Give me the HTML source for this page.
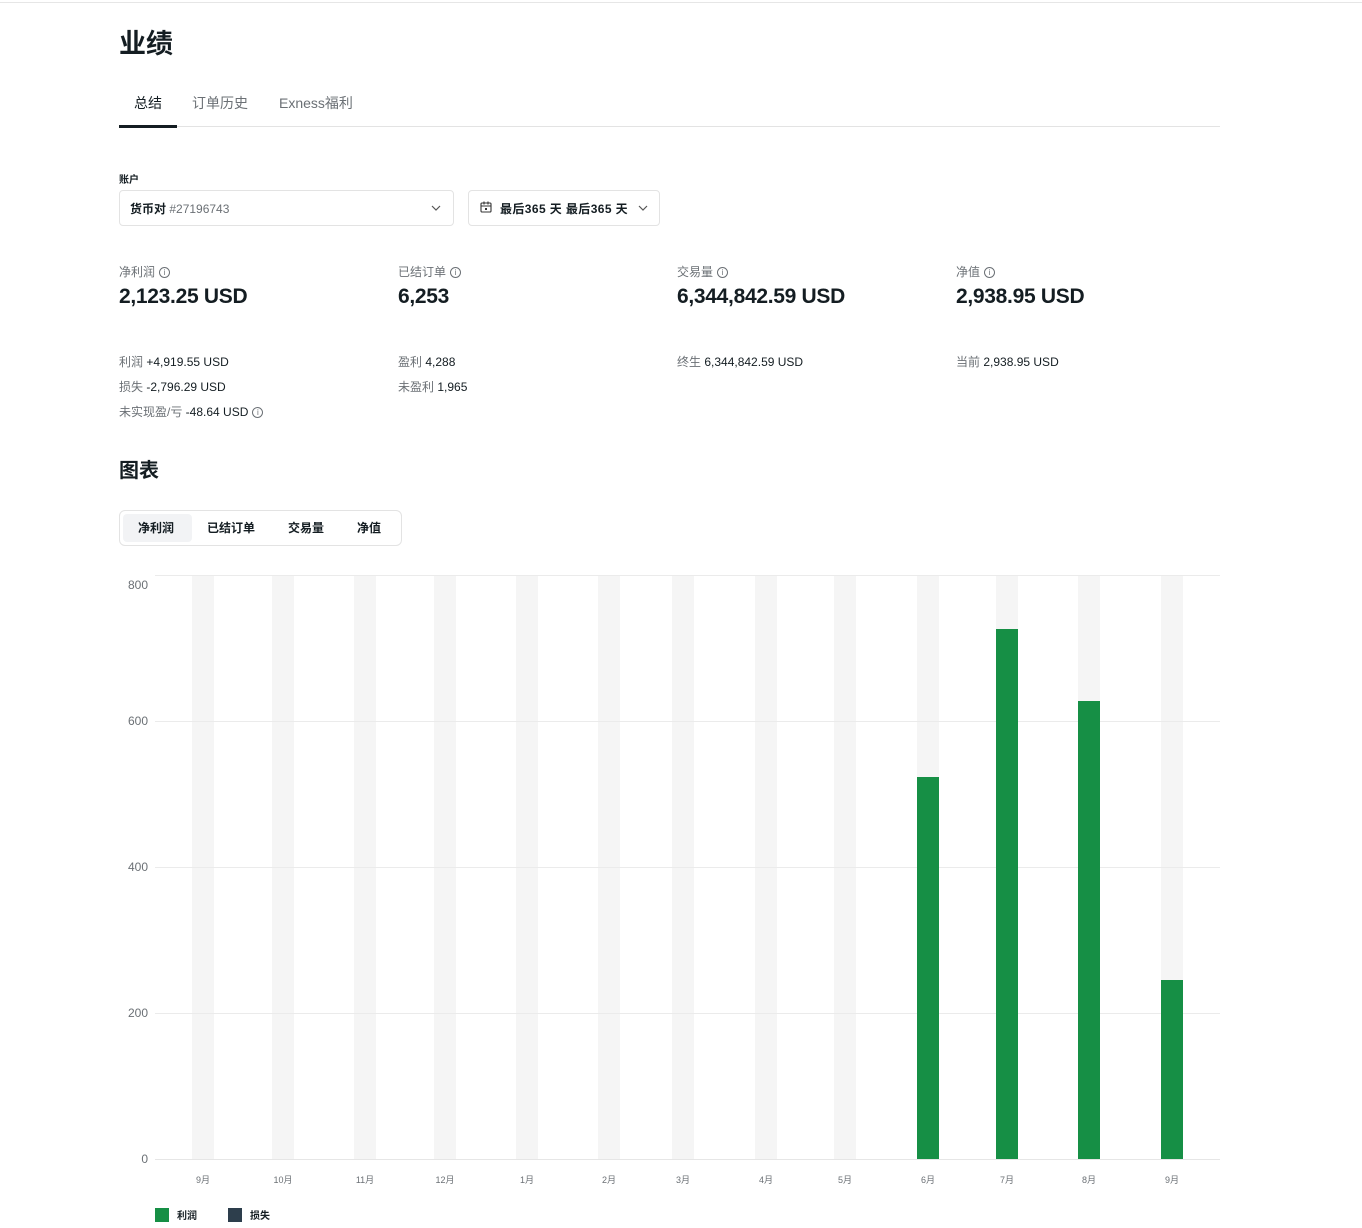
<!DOCTYPE html>
<html><head><meta charset="utf-8"><style>
*{margin:0;padding:0;box-sizing:border-box}
body{width:1362px;height:1228px;background:#fff;position:relative;overflow:hidden;font-family:"Liberation Sans","Noto Sans CJK SC",sans-serif;color:#141d22}
.a{position:absolute;white-space:nowrap}
.lbl{font-size:12px;color:#6b7075}
.big{font-size:21px;font-weight:bold;color:#141d22;letter-spacing:-0.3px}
.sm{font-size:12px;color:#141d22}
.sm span{color:#6b7075}
.i{display:inline-block;width:11px;height:11px;border:1px solid #6b7075;border-radius:50%;font-size:8px;line-height:9px;text-align:center;color:#6b7075;vertical-align:1px;margin-left:4px}
.col{position:absolute;top:575px;width:22px;height:584px;background:#f5f5f5}
.bar{position:absolute;width:22px;background:#168f45}
.gl{position:absolute;left:155px;width:1065px;height:1px;background:#ebebeb}
.yl{position:absolute;left:110px;width:38px;text-align:right;font-size:12px;color:#6b7075}
.xl{position:absolute;top:1173px;width:40px;text-align:center;font-size:9px;color:#6b7075}
</style></head><body>
<div class="a" style="left:0;top:2px;width:1362px;height:1px;background:#e6e6e6"></div>
<div class="a" style="left:119px;top:22px;font-size:27px;font-weight:bold">业绩</div>
<div class="a" style="left:134px;top:93px;font-size:14px;color:#141d22">总结</div>
<div class="a" style="left:192px;top:93px;font-size:14px;color:#6b7075">订单历史</div>
<div class="a" style="left:279px;top:93px;font-size:14px;color:#6b7075">Exness福利</div>
<div class="a" style="left:119px;top:126px;width:1101px;height:1px;background:#e3e3e3"></div>
<div class="a" style="left:119px;top:125px;width:58px;height:3px;background:#141d22"></div>

<div class="a" style="left:119px;top:171px;font-size:10px;font-weight:bold">账户</div>
<div class="a" style="left:119px;top:190px;width:335px;height:36px;border:1px solid #e3e3e3;border-radius:4px"></div>
<div class="a" style="left:130px;top:200px;font-size:12px;font-weight:bold">货币对 <span style="font-weight:normal;color:#6b7075">#27196743</span></div>
<svg class="a" style="left:431px;top:205px" width="10" height="6"><path d="M1 1l4 4 4-4" fill="none" stroke="#555" stroke-width="1.2"/></svg>
<div class="a" style="left:468px;top:190px;width:192px;height:36px;border:1px solid #e3e3e3;border-radius:4px"></div>
<svg class="a" style="left:480px;top:201px" width="12" height="12"><rect x="1" y="2" width="10" height="9" rx="1" fill="none" stroke="#333" stroke-width="1.1"/><path d="M1 5h10M4 0.5v3M8 0.5v3" stroke="#333" stroke-width="1.1"/><rect x="5" y="7" width="2" height="2" fill="#333"/></svg>
<div class="a" style="left:500px;top:200px;font-size:12px;font-weight:bold;letter-spacing:0.4px">最后365 天 最后365 天</div>
<svg class="a" style="left:638px;top:205px" width="10" height="6"><path d="M1 1l4 4 4-4" fill="none" stroke="#555" stroke-width="1.2"/></svg>

<div class="a lbl" style="left:119px;top:263px">净利润<span class="i">i</span></div>
<div class="a big" style="left:119px;top:285px">2,123.25 USD</div>
<div class="a lbl" style="left:398px;top:263px">已结订单<span class="i">i</span></div>
<div class="a big" style="left:398px;top:285px">6,253</div>
<div class="a lbl" style="left:677px;top:263px">交易量<span class="i">i</span></div>
<div class="a big" style="left:677px;top:285px">6,344,842.59 USD</div>
<div class="a lbl" style="left:956px;top:263px">净值<span class="i">i</span></div>
<div class="a big" style="left:956px;top:285px">2,938.95 USD</div>

<div class="a sm" style="left:119px;top:353px"><span>利润</span> +4,919.55 USD</div>
<div class="a sm" style="left:119px;top:378px"><span>损失</span> -2,796.29 USD</div>
<div class="a sm" style="left:119px;top:403px"><span>未实现盈/亏</span> -48.64 USD<span class="i">i</span></div>
<div class="a sm" style="left:398px;top:353px"><span>盈利</span> 4,288</div>
<div class="a sm" style="left:398px;top:378px"><span>未盈利</span> 1,965</div>
<div class="a sm" style="left:677px;top:353px"><span>终生</span> 6,344,842.59 USD</div>
<div class="a sm" style="left:956px;top:353px"><span>当前</span> 2,938.95 USD</div>

<div class="a" style="left:119px;top:454px;font-size:20px;font-weight:bold">图表</div>
<div class="a" style="left:119px;top:510px;width:283px;height:36px;border:1px solid #e3e3e3;border-radius:6px"></div>
<div class="a" style="left:123px;top:514px;width:69px;height:28px;background:#f2f3f5;border-radius:4px"></div>
<div class="a" style="left:138px;top:519px;font-size:12px;font-weight:bold">净利润</div>
<div class="a" style="left:207px;top:519px;font-size:12px;font-weight:bold">已结订单</div>
<div class="a" style="left:288px;top:519px;font-size:12px;font-weight:bold">交易量</div>
<div class="a" style="left:357px;top:519px;font-size:12px;font-weight:bold">净值</div>

<div class="col" style="left:192px"></div><div class="col" style="left:272px"></div><div class="col" style="left:354px"></div><div class="col" style="left:434px"></div><div class="col" style="left:516px"></div><div class="col" style="left:598px"></div><div class="col" style="left:672px"></div><div class="col" style="left:755px"></div><div class="col" style="left:834px"></div><div class="col" style="left:917px"></div><div class="col" style="left:996px"></div><div class="col" style="left:1078px"></div><div class="col" style="left:1161px"></div>
<div class="gl" style="top:575px"></div><div class="gl" style="top:721px"></div><div class="gl" style="top:867px"></div><div class="gl" style="top:1013px"></div><div class="gl" style="top:1159px;background:#e6e6e6"></div>
<div class="bar" style="left:917px;top:777px;height:382px"></div>
<div class="bar" style="left:996px;top:629px;height:530px"></div>
<div class="bar" style="left:1078px;top:701px;height:458px"></div>
<div class="bar" style="left:1161px;top:980px;height:179px"></div>
<div class="yl" style="top:578px">800</div><div class="yl" style="top:714px">600</div><div class="yl" style="top:860px">400</div><div class="yl" style="top:1006px">200</div><div class="yl" style="top:1152px">0</div>
<div class="xl" style="left:183px">9月</div><div class="xl" style="left:263px">10月</div><div class="xl" style="left:345px">11月</div><div class="xl" style="left:425px">12月</div><div class="xl" style="left:507px">1月</div><div class="xl" style="left:589px">2月</div><div class="xl" style="left:663px">3月</div><div class="xl" style="left:746px">4月</div><div class="xl" style="left:825px">5月</div><div class="xl" style="left:908px">6月</div><div class="xl" style="left:987px">7月</div><div class="xl" style="left:1069px">8月</div><div class="xl" style="left:1152px">9月</div>

<div class="a" style="left:155px;top:1208px;width:14px;height:14px;background:#168f45"></div>
<div class="a" style="left:177px;top:1207px;font-size:10px;font-weight:bold">利润</div>
<div class="a" style="left:228px;top:1208px;width:14px;height:14px;background:#2d3e4c"></div>
<div class="a" style="left:250px;top:1207px;font-size:10px;font-weight:bold">损失</div>
</body></html>
